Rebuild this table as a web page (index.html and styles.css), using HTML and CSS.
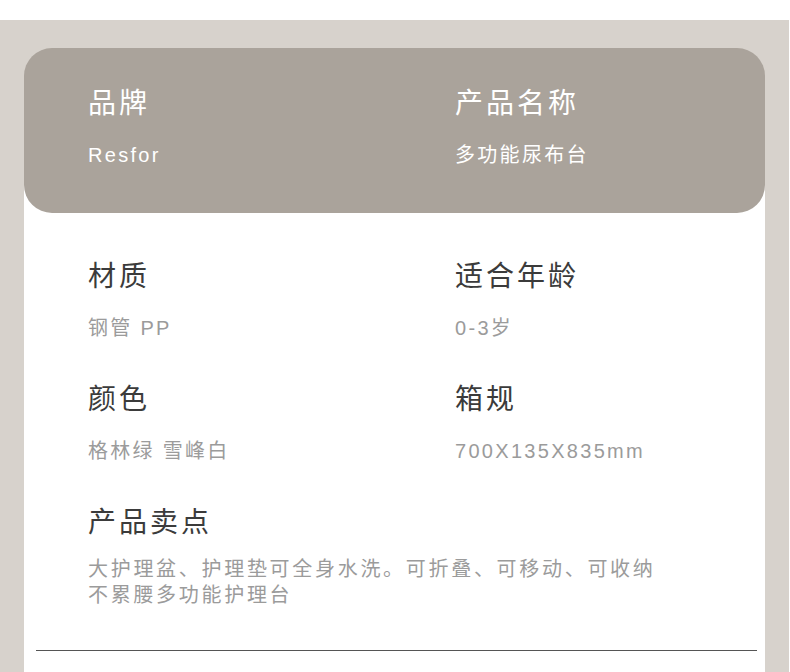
FILE: index.html
```html
<!DOCTYPE html>
<html lang="zh-CN">
<head>
<meta charset="utf-8">
<title>产品信息</title>
<link rel="stylesheet" href="styles.css">
</head>
<body>
<div class="frame">
  <div class="panel">
    <section class="card">
      <div class="item">
        <h2 class="label">品牌</h2>
        <p class="value">Resfor</p>
      </div>
      <div class="item">
        <h2 class="label">产品名称</h2>
        <p class="value">多功能尿布台</p>
      </div>
    </section>
    <section class="specs">
      <div class="item">
        <h2 class="label">材质</h2>
        <p class="value">钢管 PP</p>
      </div>
      <div class="item">
        <h2 class="label">适合年龄</h2>
        <p class="value">0-3岁</p>
      </div>
      <div class="item">
        <h2 class="label">颜色</h2>
        <p class="value">格林绿 雪峰白</p>
      </div>
      <div class="item">
        <h2 class="label">箱规</h2>
        <p class="value">700X135X835mm</p>
      </div>
    </section>
    <section class="points">
      <h2 class="label">产品卖点</h2>
      <p class="desc">大护理盆、护理垫可全身水洗。可折叠、可移动、可收纳不累腰多功能护理台</p>
    </section>
    <div class="rule"></div>
  </div>
</div>
</body>
</html>
```

FILE: styles.css
```css
* { box-sizing: border-box; }
html, body { margin: 0; padding: 0; background: #ffffff; }
body {
  font-family: "Liberation Sans", "Noto Sans CJK SC", sans-serif;
  width: 790px;
  height: 672px;
  overflow: hidden;
}
.frame {
  margin-top: 20px;
  width: 789px;
  height: 652px;
  background: #d7d2cc;
  padding: 28px 24px 0 24px;
}
.panel {
  height: 100%;
  background: linear-gradient(to bottom, transparent 120px, #ffffff 120px);
  display: flex;
  flex-direction: column;
}
.card {
  background: #aaa39b;
  border-radius: 28px;
  height: 165px;
  padding: 38px 0 0 64px;
  display: grid;
  grid-template-columns: 367px 1fr;
}
.label {
  margin: 0;
  font-weight: normal;
  font-size: 28px;
  line-height: 36px;
  letter-spacing: 3px;
  color: #3b3b3b;
}
.value {
  margin: 20px 0 0 0;
  font-size: 20px;
  line-height: 26px;
  letter-spacing: 2.3px;
  color: #9b9b9b;
}
.card .label, .card .value { color: #ffffff; }
.specs {
  padding: 46px 0 0 64px;
  display: grid;
  grid-template-columns: 367px 1fr;
  row-gap: 41px;
}
.points {
  padding: 41px 0 0 64px;
}
.desc {
  margin: 15px 0 0 0;
  width: 590px;
  font-size: 20px;
  line-height: 26px;
  letter-spacing: 2.7px;
  color: #9b9b9b;
}
.rule {
  margin: 42px 8px 0 12px;
  height: 1px;
  background: #555555;
}
```
